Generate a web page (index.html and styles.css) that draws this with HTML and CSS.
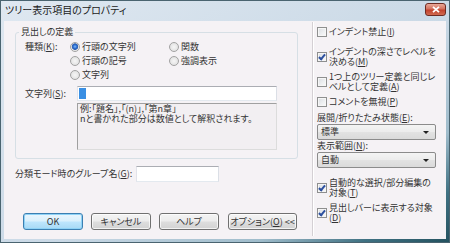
FILE: index.html
```html
<!DOCTYPE html>
<html lang="ja">
<head>
<meta charset="utf-8">
<link rel="stylesheet" href="styles.css">
</head>
<body>
<div class="window">
  <div class="titlebar">
    <span class="title">ツリー表示項目のプロパティ</span>
    <span class="close"><svg width="8" height="7" viewBox="0 0 8 7"><path d="M1 0.8 L7 6.2 M7 0.8 L1 6.2" stroke="#fff" stroke-width="1.8" fill="none"/></svg></span>
  </div>
  <div class="client">
    <div class="left">
      <fieldset class="group">
        <legend>見出しの定義</legend>
        <div class="kind-row">
          <span class="kind-label">種類(<u>K</u>):</span>
          <div class="radios">
            <span class="radio on"><i></i>行頭の文字列</span>
            <span class="radio"><i></i>関数</span>
            <span class="radio"><i></i>行頭の記号</span>
            <span class="radio"><i></i>強調表示</span>
            <span class="radio"><i></i>文字列</span>
          </div>
        </div>
        <div class="str-row">
          <span class="str-label">文字列(<u>S</u>):</span>
          <div class="str-col">
            <div class="textbox"><span class="sel"></span></div>
            <div class="desc">例:「題名」,「(n)」,「第n章」<br>nと書かれた部分は数値として解釈されます。</div>
          </div>
        </div>
      </fieldset>
      <div class="group-row">
        <span class="group-label">分類モード時のグループ名(<u>G</u>):</span>
        <div class="textbox small"></div>
      </div>
      <div class="buttons">
        <span class="btn default">OK</span>
        <span class="btn">キャンセル</span>
        <span class="btn">ヘルプ</span>
        <span class="btn wide">オプション(<u>O</u>) &lt;&lt;</span>
      </div>
    </div>
    <div class="sep"></div>
    <div class="right">
      <div class="check cb1"><i></i><span>インデント禁止(<u>I</u>)</span></div>
      <div class="check cb2 on"><i></i><span>インデントの深さでレベルを<br>決める(<u>M</u>)</span></div>
      <div class="check cb3"><i></i><span>1つ上のツリー定義と同じレ<br>ベルとして定義(<u>A</u>)</span></div>
      <div class="check cb4"><i></i><span>コメントを無視(<u>P</u>)</span></div>
      <div class="field-label fl1">展開/折りたたみ状態(<u>E</u>):</div>
      <div class="select"><span>標準</span><b></b></div>
      <div class="field-label fl2">表示範囲(<u>N</u>):</div>
      <div class="select"><span>自動</span><b></b></div>
      <div class="check cb5 on"><i></i><span>自動的な選択/部分編集の<br>対象(<u>T</u>)</span></div>
      <div class="check cb6 on"><i></i><span>見出しバーに表示する対象<br>(<u>D</u>)</span></div>
    </div>
  </div>
</div>
</body>
</html>
```
FILE: styles.css
```css
* { box-sizing: border-box; }
html, body { margin: 0; padding: 0; }
body {
  width: 450px;
  height: 243px;
  overflow: hidden;
  font-family: "Noto Sans CJK JP", "Noto Sans", sans-serif;
  font-size: 9px;
  line-height: 10px;
  color: #333;
  font-feature-settings: "palt";
}
u { text-decoration: underline; text-underline-offset: 1px; text-decoration-thickness: 1px; }

.window {
  width: 450px;
  height: 243px;
  display: flex;
  flex-direction: column;
  border: 1px solid #4a6470;
  padding: 0 3px 3px 3px;
  background: linear-gradient(150deg, #dfe8f1 0%, #cad9e6 55%, #9fbccb 78%, #3f7182 90%, #24525f 100%);
}

.titlebar {
  height: 20px;
  display: flex;
  align-items: flex-start;
  justify-content: space-between;
  margin: 0 -3px;
}
.title {
  font-size: 10px;
  line-height: 18px;
  padding-left: 4px;
  color: #1a1a1a;
}
.close {
  width: 21px;
  height: 13px;
  margin: 2px 3px 0 0;
  border: 1px solid #6e2b22;
  border-radius: 3px;
  background: linear-gradient(180deg, #e9a898 0%, #d3715e 45%, #c2412c 55%, #d06a50 100%);
  display: flex;
  align-items: center;
  justify-content: center;
}

.client {
  flex: 1;
  display: flex;
  background: #f5f2f5;
}

.left {
  width: 313px;
  padding: 6px 0 9px 11px;
  display: flex;
  flex-direction: column;
}

.group {
  margin: 0;
  padding: 0 0 8px 0;
  width: 283px;
  min-width: 0;
  border: 1px solid #d6dfe5;
  border-radius: 3px;
}
.group legend {
  margin-left: 3px;
  padding: 0 2px;
  line-height: 10px;
}

.kind-row {
  display: flex;
  padding: 3px 0 0 9px;
}
.kind-label {
  width: 45px;
  line-height: 14px;
}
.radios {
  display: grid;
  grid-template-columns: 99px auto;
  grid-auto-rows: 14px;
}
.radio {
  display: flex;
  align-items: center;
}
.radio i {
  width: 10px;
  height: 10px;
  margin-right: 2px;
  border: 1px solid #a2a2a2;
  border-radius: 50%;
  background: radial-gradient(circle at 50% 50%, #f6f6f6 0, #e6e6e6 60%, #dcdcdc 100%);
  flex: none;
}
.radio.on i {
  background: radial-gradient(circle at 50% 45%, #7ab8ff 0, #2465c8 35%, #3a64ae 50%, #e8e8e8 60%, #f4f4f4 100%);
}

.str-row {
  display: flex;
  margin-top: 4px;
  padding-left: 9px;
}
.str-label {
  width: 52px;
  line-height: 15px;
}
.str-col { width: 200px; }
.textbox {
  height: 15px;
  background: #fff;
  border: 1px solid #abadb3;
  border-color: #abadb3 #dbdfe6 #e3e9ef #e2e3ea;
  padding: 1px 1px;
}
.sel {
  display: block;
  width: 7px;
  height: 11px;
  background: #3a8fe3;
}
.desc {
  margin-top: 2px;
  height: 47px;
  border: 1px solid #a0a0a0;
  border-color: #a0a0a0 #dcdcdc #dcdcdc #a0a0a0;
  background: #f2eff2;
  padding: 0 2px;
  line-height: 10px;
  white-space: nowrap;
}

.group-row {
  display: flex;
  align-items: center;
  margin-top: 7px;
}
.group-label { width: 121px; }
.textbox.small {
  width: 83px;
  height: 16px;
}

.buttons {
  margin-top: auto;
  display: flex;
  gap: 8px;
  padding-left: 8px;
}
.btn {
  width: 60px;
  height: 17px;
  border: 1px solid #707070;
  border-radius: 3px;
  background: linear-gradient(180deg, #f4f4f4 0%, #ececec 48%, #dedede 52%, #d2d2d2 100%);
  display: flex;
  align-items: center;
  justify-content: center;
  box-shadow: inset 0 0 0 1px rgba(255,255,255,0.7);
}
.btn.default {
  border-color: #3c7fb1;
  background: linear-gradient(180deg, #eaf6fd 0%, #d9f0fc 48%, #bee6fd 52%, #a7d9f5 100%);
  box-shadow: inset 0 0 0 1px #8ed2f6;
}
.btn.wide {
  width: 69px;
  margin-left: 1px;
}

.sep {
  width: 2px;
  margin: 1px 0 3px 0;
  border-left: 1px solid #d4d0d4;
  border-right: 1px solid #ffffff;
}

.right {
  flex: 1;
  padding: 6px 10px 0 3px;
  display: flex;
  flex-direction: column;
}
.check {
  display: flex;
  align-items: center;
  white-space: nowrap;
}
.check i {
  position: relative;
  width: 10px;
  height: 10px;
  margin-right: 2px;
  border: 1px solid #8e8f8f;
  background: linear-gradient(135deg, #d9dce0 0%, #eef0f2 60%, #fafafa 100%);
  box-shadow: inset 0 0 0 1px #f6f6f6;
  flex: none;
}
.check.on i::after {
  content: "";
  position: absolute;
  left: 2px;
  top: 0px;
  width: 2px;
  height: 5px;
  border: solid #2c4f9e;
  border-width: 0 2px 2px 0;
  transform: rotate(40deg);
}
.cb2 { margin-top: 10px; }
.cb3 { margin-top: 5px; }
.cb4 { margin-top: 5px; }
.fl1 { margin-top: 6px; }
.fl2 { margin-top: 1px; }
.cb5 { margin-top: 10px; }
.cb6 { margin-top: 5px; }
.field-label { line-height: 10px; }
.select {
  margin-top: 1px;
  height: 16px;
  border: 1px solid #8b8b8b;
  border-radius: 2px;
  background: linear-gradient(180deg, #f4f4f4 0%, #ececec 48%, #e2e2e2 52%, #dadada 100%);
  display: flex;
  align-items: center;
  justify-content: space-between;
  padding: 0 6px 0 3px;
}
.select b {
  width: 0;
  height: 0;
  border-left: 3px solid transparent;
  border-right: 3px solid transparent;
  border-top: 3px solid #222;
}
```
